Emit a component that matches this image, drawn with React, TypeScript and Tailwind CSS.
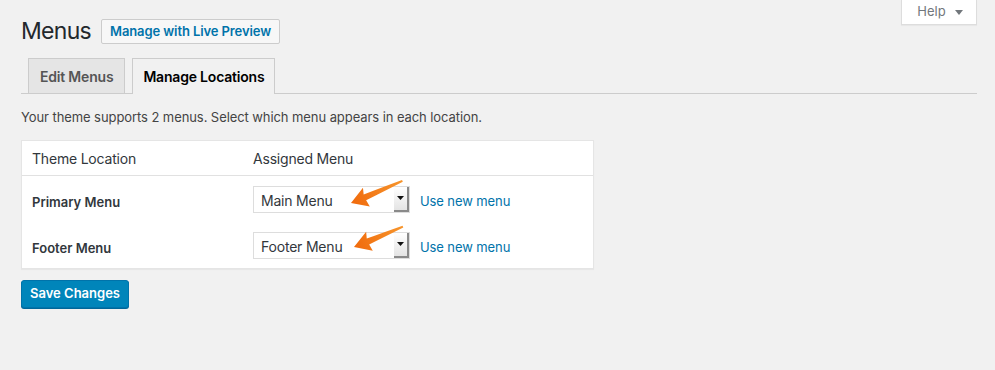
import React from "react";

function MenuSelect({ label }: { label: string }) {
  return (
    <div className="flex items-center gap-[10px]">
      <div className="flex h-[27px] w-[157px] items-stretch border border-[#ddd] bg-white">
        <span className="flex flex-1 items-center pl-[7px] pt-[2px] text-[14px] tracking-[-0.2px] text-[#32373c]">{label}</span>
        <span className="flex w-[15px] items-center justify-center border-r-2 border-b-2 border-r-[#8a8a8a] border-b-[#8a8a8a] bg-gradient-to-b from-white to-[#e4e4e4]">
          <svg width="7" height="4" viewBox="0 0 7 4">
            <path d="M0 0h7L3.5 4z" fill="#111" />
          </svg>
        </span>
      </div>
      <a className="mt-[6px] text-[13px] tracking-[-0.1px] text-[#0073aa]">Use new menu</a>
    </div>
  );
}

function Arrow({ x, y, angle, length }: { x: number; y: number; angle: number; length: number }) {
  return (
    <g transform={`translate(${x} ${y}) rotate(${angle})`}>
      <path
        d={`M0 0 L17 -9.5 L15 -3 Q${length * 0.6} -2.4 ${length} -1.4 L${length} 0.6 Q${length * 0.6} 2.2 15 3.4 L16 10.5 Z`}
        fill="url(#orange)"
      />
    </g>
  );
}

export default function App() {
  return (
    <div className="min-h-screen bg-[#f1f1f1] pl-[21px] pr-[18px] font-['Inter',sans-serif] text-[13px] text-[#444]">
      {/* help tab */}
      <div className="flex justify-end">
        <button className="flex h-[25px] w-[76px] items-center justify-center gap-[9px] border border-t-0 border-[#ddd] bg-white pl-[2px] text-[13px] text-[#72777c] shadow-[0_1px_1px_rgba(0,0,0,0.04)]">
          Help
          <svg width="8" height="5" viewBox="0 0 8 5">
            <path d="M0 0h8L4 5z" fill="#72777c" />
          </svg>
        </button>
      </div>

      <div className="-mt-[6px] flex h-[25px] items-center gap-[10px]">
        <h1 className="text-[23px] leading-none tracking-[-0.7px] text-[#23282d]">Menus</h1>
        <a className="flex h-[25px] items-center rounded-[2px] border border-[#ccc] bg-[#f7f7f7] px-[8px] text-[13px] font-semibold tracking-[-0.1px] text-[#0073aa]">
          Manage with Live Preview
        </a>
      </div>

      <div className="mt-[14px] flex items-end gap-[7px] border-b border-[#ccc] pl-[7px]">
        <a className="flex h-[35px] items-center border border-b-0 border-[#ccc] bg-[#e5e5e5] px-[11px] text-[14px] font-semibold tracking-[-0.2px] text-[#555]">
          Edit Menus
        </a>
        <a className="relative -mb-px flex h-[36px] items-center border border-b-0 border-[#ccc] bg-[#f1f1f1] px-[10px] pb-px text-[14px] font-semibold tracking-[-0.2px] text-black">
          Manage Locations
        </a>
      </div>

      <p className="mt-[14px] leading-[19px] tracking-[-0.08px]">
        Your theme supports 2 menus. Select which menu appears in each location.
      </p>

      <div className="relative mt-[13px] w-[573px] border border-[#e5e5e5] bg-white shadow-[0_1px_1px_rgba(0,0,0,0.04)]">
        <div className="flex h-[35px] items-center border-b border-[#e1e1e1] text-[14px] tracking-[-0.2px] text-[#32373c]">
          <span className="w-[231px] pl-[10px]">Theme Location</span>
          <span>Assigned Menu</span>
        </div>
        <div className="flex h-[46px] items-center">
          <span className="mt-[7px] w-[231px] pl-[10px] font-semibold text-[#32373c]">Primary Menu</span>
          <MenuSelect label="Main Menu" />
        </div>
        <div className="flex h-[46px] items-center">
          <span className="mt-[7px] w-[231px] pl-[10px] font-semibold text-[#32373c]">Footer Menu</span>
          <MenuSelect label="Footer Menu" />
        </div>

        <svg className="pointer-events-none absolute left-0 top-0" width="573" height="128">
          <defs>
            <linearGradient id="orange" x1="0" y1="0" x2="1" y2="0">
              <stop offset="0" stopColor="#f06a0c" />
              <stop offset="1" stopColor="#f7952c" />
            </linearGradient>
          </defs>
          <Arrow x={329} y={62} angle={-22.9} length={56} />
          <Arrow x={332} y={106} angle={-22.2} length={53} />
        </svg>
      </div>

      <button className="mt-[11px] h-[28px] w-[108px] rounded-[3px] border border-[#0073aa] bg-[#0085ba] text-[13px] font-semibold text-white shadow-[0_1px_0_#006799]">
        Save Changes
      </button>
    </div>
  );
}
